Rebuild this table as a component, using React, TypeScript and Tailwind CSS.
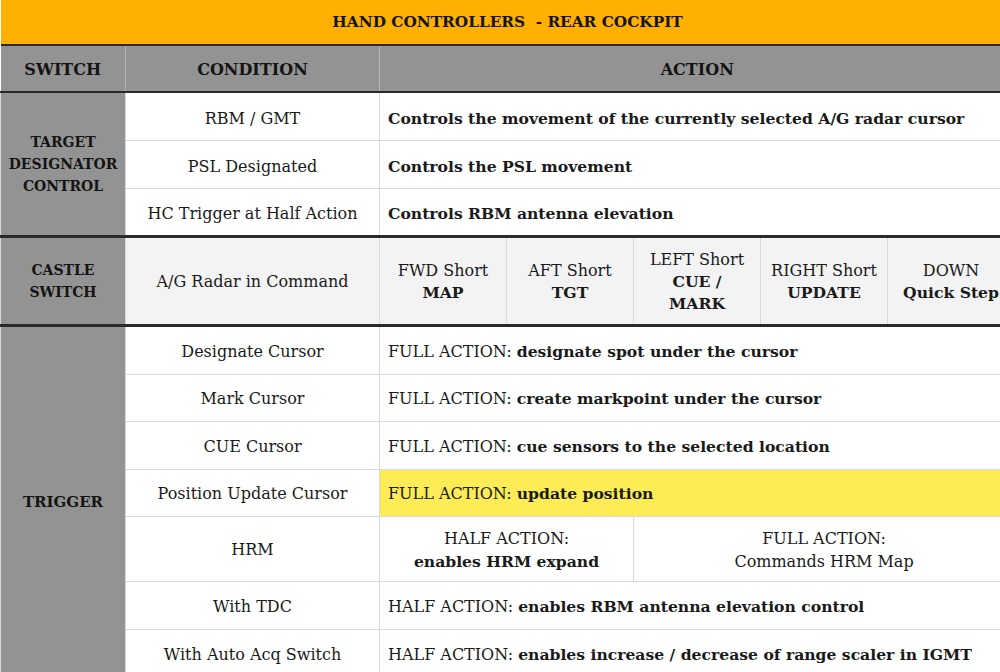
import React from "react";

const serif = "font-['DejaVu_Serif','Liberation_Serif',serif]";

type Row = {
  condition: string;
  strong: string;
};

const targetRows: Row[] = [
  { condition: "RBM / GMT", strong: "Controls the movement of the currently selected A/G radar cursor" },
  { condition: "PSL Designated", strong: "Controls the PSL movement" },
  { condition: "HC Trigger at Half Action", strong: "Controls RBM antenna elevation" },
];

const castle = [
  { top: "FWD Short", bold: ["MAP"] },
  { top: "AFT Short", bold: ["TGT"] },
  { top: "LEFT Short", bold: ["CUE /", "MARK"] },
  { top: "RIGHT Short", bold: ["UPDATE"] },
  { top: "DOWN", bold: ["Quick Step"] },
];

function B({ children }: { children: React.ReactNode }) {
  return <span className="font-bold text-[15.6px]">{children}</span>;
}

export default function App() {
  const cell = "border border-[#d9d9d9] text-[16px] text-[#1a1a1a] pt-[3px]";
  const sideCell =
    "border border-[#d9d9d9] bg-[#939393] text-center font-bold text-[14px] leading-[22px] text-[#141414]";

  return (
    <div className={`w-[1000px] h-[672px] overflow-hidden bg-white ${serif}`}>
      <table className="w-[1014px] table-fixed border-collapse">
        <colgroup>
          <col className="w-[125px]" />
          <col className="w-[254px]" />
          <col className="w-[127px]" />
          <col className="w-[127px]" />
          <col className="w-[127px]" />
          <col className="w-[127px]" />
          <col className="w-[127px]" />
        </colgroup>
        <tbody>
          <tr className="h-[45px] border-b-2 border-[#2a2a2a]">
            <td
              colSpan={7}
              className="bg-[#ffb000] text-center font-bold text-[15.3px] text-[#141414]"
            >
              HAND CONTROLLERS&nbsp; - REAR COCKPIT
            </td>
          </tr>
          <tr className="h-[47px] bg-[#939393] border-b-2 border-[#2a2a2a] font-bold text-[16px] text-[#141414]">
            <td className="text-center border-r border-[#b5b5b5] pt-[3px]">SWITCH</td>
            <td className="text-center border-r border-[#b5b5b5] pt-[3px]">CONDITION</td>
            <td colSpan={5} className="text-center pt-[3px]">ACTION</td>
          </tr>

          {targetRows.map((r, i) => (
            <tr
              key={r.condition}
              className={`h-[48px] ${i === 2 ? "border-b-[3px] border-[#2a2a2a]" : ""}`}
            >
              {i === 0 && (
                <td rowSpan={3} className={sideCell}>
                  TARGET
                  <br />
                  DESIGNATOR
                  <br />
                  CONTROL
                </td>
              )}
              <td className={`${cell} text-center pt-[5px]`}>{r.condition}</td>
              <td colSpan={5} className={`${cell} pl-[8px] pt-[5px]`}>
                <B>{r.strong}</B>
              </td>
            </tr>
          ))}

          <tr className="h-[89px] border-b-[3px] border-[#2a2a2a]">
            <td className={sideCell}>
              CASTLE
              <br />
              SWITCH
            </td>
            <td className={`${cell} bg-[#f3f3f3] text-center`}>A/G Radar in Command</td>
            {castle.map((c) => (
              <td
                key={c.top}
                className={`${cell} bg-[#f3f3f3] text-center leading-[22px] px-1`}
              >
                {c.top}
                {c.bold.map((b) => (
                  <React.Fragment key={b}>
                    <br />
                    <B>{b}</B>
                  </React.Fragment>
                ))}
              </td>
            ))}
          </tr>

          <tr className="h-[49px]">
            <td rowSpan={7} className={`${sideCell} text-[15px]`}>
              TRIGGER
            </td>
            <td className={`${cell} text-center`}>Designate Cursor</td>
            <td colSpan={5} className={`${cell} pl-[8px]`}>
              FULL ACTION: <B>designate spot under the cursor</B>
            </td>
          </tr>
          <tr className="h-[47px]">
            <td className={`${cell} text-center`}>Mark Cursor</td>
            <td colSpan={5} className={`${cell} pl-[8px]`}>
              FULL ACTION: <B>create markpoint under the cursor</B>
            </td>
          </tr>
          <tr className="h-[48px]">
            <td className={`${cell} text-center`}>CUE Cursor</td>
            <td colSpan={5} className={`${cell} pl-[8px]`}>
              FULL ACTION: <B>cue sensors to the selected location</B>
            </td>
          </tr>
          <tr className="h-[47px]">
            <td className={`${cell} text-center`}>Position Update Cursor</td>
            <td colSpan={5} className={`${cell} pl-[8px] bg-[#fdec55]`}>
              FULL ACTION: <B>update position</B>
            </td>
          </tr>
          <tr className="h-[65px]">
            <td className={`${cell} text-center`}>HRM</td>
            <td colSpan={2} className={`${cell} text-center leading-[23px]`}>
              HALF ACTION:
              <br />
              <B>enables HRM expand</B>
            </td>
            <td colSpan={3} className={`${cell} text-center leading-[23px]`}>
              FULL ACTION:
              <br />
              Commands HRM Map
            </td>
          </tr>
          <tr className="h-[48px]">
            <td className={`${cell} text-center`}>With TDC</td>
            <td colSpan={5} className={`${cell} pl-[8px]`}>
              HALF ACTION: <B>enables RBM antenna elevation control</B>
            </td>
          </tr>
          <tr className="h-[48px]">
            <td className={`${cell} text-center`}>With Auto Acq Switch</td>
            <td colSpan={5} className={`${cell} pl-[8px]`}>
              HALF ACTION: <B>enables increase / decrease of range scaler in IGMT</B>
            </td>
          </tr>
        </tbody>
      </table>
    </div>
  );
}
